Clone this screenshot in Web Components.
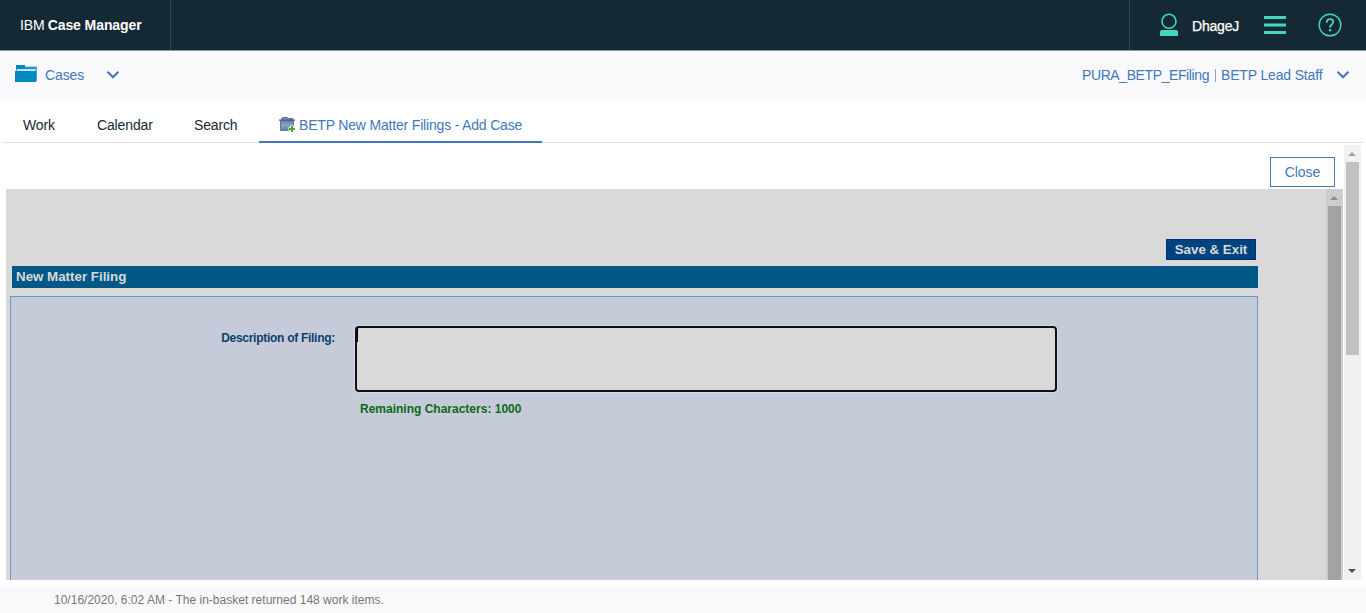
<!DOCTYPE html>
<html lang="en"><head><meta charset="utf-8"><title>IBM Case Manager</title>
<style>html,body{margin:0;height:100%;overflow:hidden;background:#fff}body{font:14px/20px "Liberation Sans",Arial,sans-serif}</style></head>
<body>
<case-manager-app></case-manager-app>
<script>
const define = (name, html) => {
  const t = document.createElement('template');
  t.innerHTML = '<style>*{box-sizing:border-box}:host{box-sizing:border-box;white-space:nowrap}</style>' + html;
  customElements.define(name, class extends HTMLElement {
    constructor() {
      super();
      this.attachShadow({mode: 'open'}).append(t.content.cloneNode(true));
    }
  });
};

define('chevron-down', `<style>:host{display:block;flex:none;width:14px;height:10px}svg{display:block}</style>
<svg width="14" height="10" viewBox="0 0 14 10"><path d="M1.6 1.8 7 7.2 12.4 1.8" fill="none" stroke="#4178be" stroke-width="2.2"/></svg>`);

define('app-header', `<style>
:host{display:flex;height:51px;background:#152934;border-bottom:1px solid #8c969c;color:#fff}
.brand{width:171px;padding:15px 0 0 20px;border-right:1px solid #264a60;letter-spacing:-.08px}
b{margin-left:3px}
.user{margin-left:auto;width:237px;border-left:1px solid #264a60;display:flex;padding-left:29px}
.name{margin:16px 0 0 13px;width:72px;letter-spacing:-.2px;-webkit-text-stroke:.25px #fff}
svg{display:block;flex:none}
</style>
<div class="brand">IBM<b>Case Manager</b></div>
<div class="user">
<svg width="20" height="50" viewBox="0 0 20 50"><circle cx="10" cy="21.3" r="7" fill="none" stroke="#41d6c3" stroke-width="1.6"/><path d="M1 36v-4q0-2 2-2h14q2 0 2 2v4z" fill="#41d6c3"/></svg>
<div class="name">DhageJ</div>
<svg width="22" height="50" viewBox="0 0 22 50"><path d="M0 17.5h22M0 25h22M0 32.5h22" stroke="#41d6c3" stroke-width="3"/></svg>
<svg style="margin-left:31px" width="26" height="50" viewBox="0 0 26 50" fill="none" stroke="#41d6c3"><circle cx="13" cy="25" r="10.8" stroke-width="1.4"/><path d="M9.800 22.800v-.7c0-1.800 1.300-2.900 3.200-2.900s3.300 1.200 3.300 2.900c0 2.300-3.200 2.500-3.200 4.700v1" stroke-width="1.7"/><circle cx="13.1" cy="30.200" r="1.200" fill="#41d6c3" stroke="none"/></svg>
</div>`);

define('feature-bar', `<style>
:host{display:flex;height:49px;background:#f9f9fb;color:#4178be;padding:0 16px 0 15px;align-items:center}
svg{margin:-4px 8px 0 0}.c{width:61px;letter-spacing:-.12px;margin-top:-2px}chevron-down{margin-top:-1px}.role{margin:-2px 0 0 auto;display:flex;width:268px}
.a{letter-spacing:-.4px;width:132px;flex:none}.bar{width:1px;height:13px;background:#7fa5d5;margin:4px 5px 0 1px}.b{letter-spacing:-.16px;width:115px;flex:none}
.role chevron-down{margin-top:5px}
</style>
<svg width="22" height="17" viewBox="0 0 22 17"><path d="M1 0h9v1.500h12v14L21 17H1z" fill="#40a9d5"/><path d="M1 0h9v2.800h10.500v1.500H1z" fill="#008abf"/><path d="M2 4.300h18.500v1.400H2z" fill="#fff"/><path d="M0 6h21v9.500L20 17H0z" fill="#008abf"/></svg>
<span class="c">Cases</span><chevron-down></chevron-down>
<div class="role"><span class="a">PURA_BETP_EFiling</span><i class="bar"></i><span class="b">BETP Lead Staff</span><chevron-down></chevron-down></div>`);

define('page-tab', `<style>
:host{display:flex;height:43px;padding:15px 20px 0;color:#152935;letter-spacing:-.14px}
:host([selected]){border-bottom:2px solid #4178be;color:#4178be;letter-spacing:-.18px;padding-right:0}
</style><slot></slot>`);

define('tab-strip', `<style>
:host{display:flex;height:43px;margin:0 2px 0 3px;border-bottom:1px solid #dfdfdf}
svg{margin:1px 3px 0 0}
</style>
<page-tab style="width:74px">Work</page-tab><page-tab style="width:97px">Calendar</page-tab><page-tab style="width:85px">Search</page-tab>
<page-tab selected style="width:283px"><svg width="17" height="17" viewBox="0 0 17 17"><defs><linearGradient id="g" x2="0" y2="1"><stop stop-color="#6484ab"/><stop offset=".5" stop-color="#86a3c4"/><stop offset="1" stop-color="#5e7ea6"/></linearGradient></defs><path d="M2.500 4V2.500l1-1h5l1 1h4V4" fill="#7892b4" stroke="#4f6c94"/><path d="M1.500 4.500h13v10h-13z" fill="url(#g)" stroke="#5b7ba3"/><path d="M0 3.500h16v1.200H0z" fill="#3f5b82"/><path d="M13 9.500v7M9.500 13h7" stroke="#fff" stroke-width="3.600"/><path d="M13 10v6M10 13h6" stroke="#55a52d" stroke-width="2"/></svg>BETP New Matter Filings - Add Case</page-tab>`);

define('scroll-rail', `<style>
:host{display:flex;flex-direction:column;align-items:flex-start;padding-left:2px;width:17px;flex:none;background:var(--track);overflow:hidden}
i{margin-left:2px!important}
.up,.down{width:0;border:4px solid transparent;flex:none}
.up{border-top:0;border-bottom-color:var(--arrow);margin:7px 0 6px}
.down{border-bottom:0;border-top-color:#505050;margin:auto 0 7px}
.thumb{width:13px;height:var(--thumb-h);background:var(--thumb);flex:none}
:host([clipped]) .down{display:none}
</style><i class="up"></i><div class="thumb"></div><i class="down"></i>`);

define('plain-button', `<style>:host{display:block;width:65px;height:30px;border:1px solid #4178be;background:#fff;color:#4178be;text-align:center;line-height:29px;letter-spacing:-.1px}</style><slot></slot>`);

define('description-field', `<style>
:host{display:grid;grid-template-columns:344px 702px;padding-top:29px;font-weight:bold;font-size:12px}
label{color:#0e3e6b;text-align:right;padding:2px 20px 0 0;letter-spacing:-.28px}
.box{height:66px;border:2px solid #101010;border-radius:4px;background:#d9d9d9;box-shadow:0 0 0 1px #d5d9e2}
.caret{width:1px;height:14px;background:#000}
.left{grid-column:2;color:#0a6a18;padding:7px 0 0 5px}
</style><label>Description of Filing:</label><div class="box"><div class="caret"></div></div><div class="left">Remaining Characters: 1000</div>`);

define('filing-form', `<style>
:host{display:flex;flex-direction:column;flex:1;min-width:0;padding:50px 68px 0 4px;background:#d9d9d9;overflow:hidden;font-weight:bold;font-size:13.33px;color:#d9d9d9}
.save{align-self:flex-end;margin-right:2px;width:90px;height:21px;background:#00437f;border:1px solid #00327a;line-height:19px;text-align:center}
.title{height:22px;margin:6px 0 0 2px;padding-left:4px;background:#005887;line-height:21px}
.panel{flex:1;margin-top:8px;border:1px solid #6699c3;border-bottom:0;background:#c5cbd9}
</style><div class="save">Save &amp; Exit</div><div class="title">New Matter Filing</div><div class="panel"><description-field></description-field></div>`);

define('case-page', `<style>
:host{display:flex;height:437px;padding:2px 5px 0 6px;background:#fff}
.main{width:1337px;display:flex;flex-direction:column}
.tools{height:44px;padding:12px 8px 0 0;display:flex;justify-content:flex-end}
.frame{flex:1;display:flex;min-height:0}
.outer{margin-left:1px;--track:#f1f1f1;--thumb:#c1c1c1;--arrow:#a3a3a3;--thumb-h:193px}
.inner{--track:#cdcdcd;--thumb:#a3a3a3;--arrow:#898989;--thumb-h:400px}
</style><div class="main"><div class="tools"><plain-button>Close</plain-button></div><div class="frame"><filing-form></filing-form><scroll-rail class="inner" clipped></scroll-rail></div></div><scroll-rail class="outer"></scroll-rail>`);

define('status-bar', `<style>:host{display:block;height:28px;margin-top:5px;background:#f9f9fb;color:#777677;font-size:12px;padding:5px 0 0 54px;letter-spacing:.01px}</style><slot></slot>`);

define('case-manager-app', `<style>:host{display:flex;flex-direction:column;height:613px}:host>*{flex:none}</style>
<app-header></app-header><feature-bar></feature-bar><tab-strip></tab-strip><case-page></case-page><status-bar>10/16/2020, 6:02 AM - The in-basket returned 148 work items.</status-bar>`);
</script>
</body></html>
